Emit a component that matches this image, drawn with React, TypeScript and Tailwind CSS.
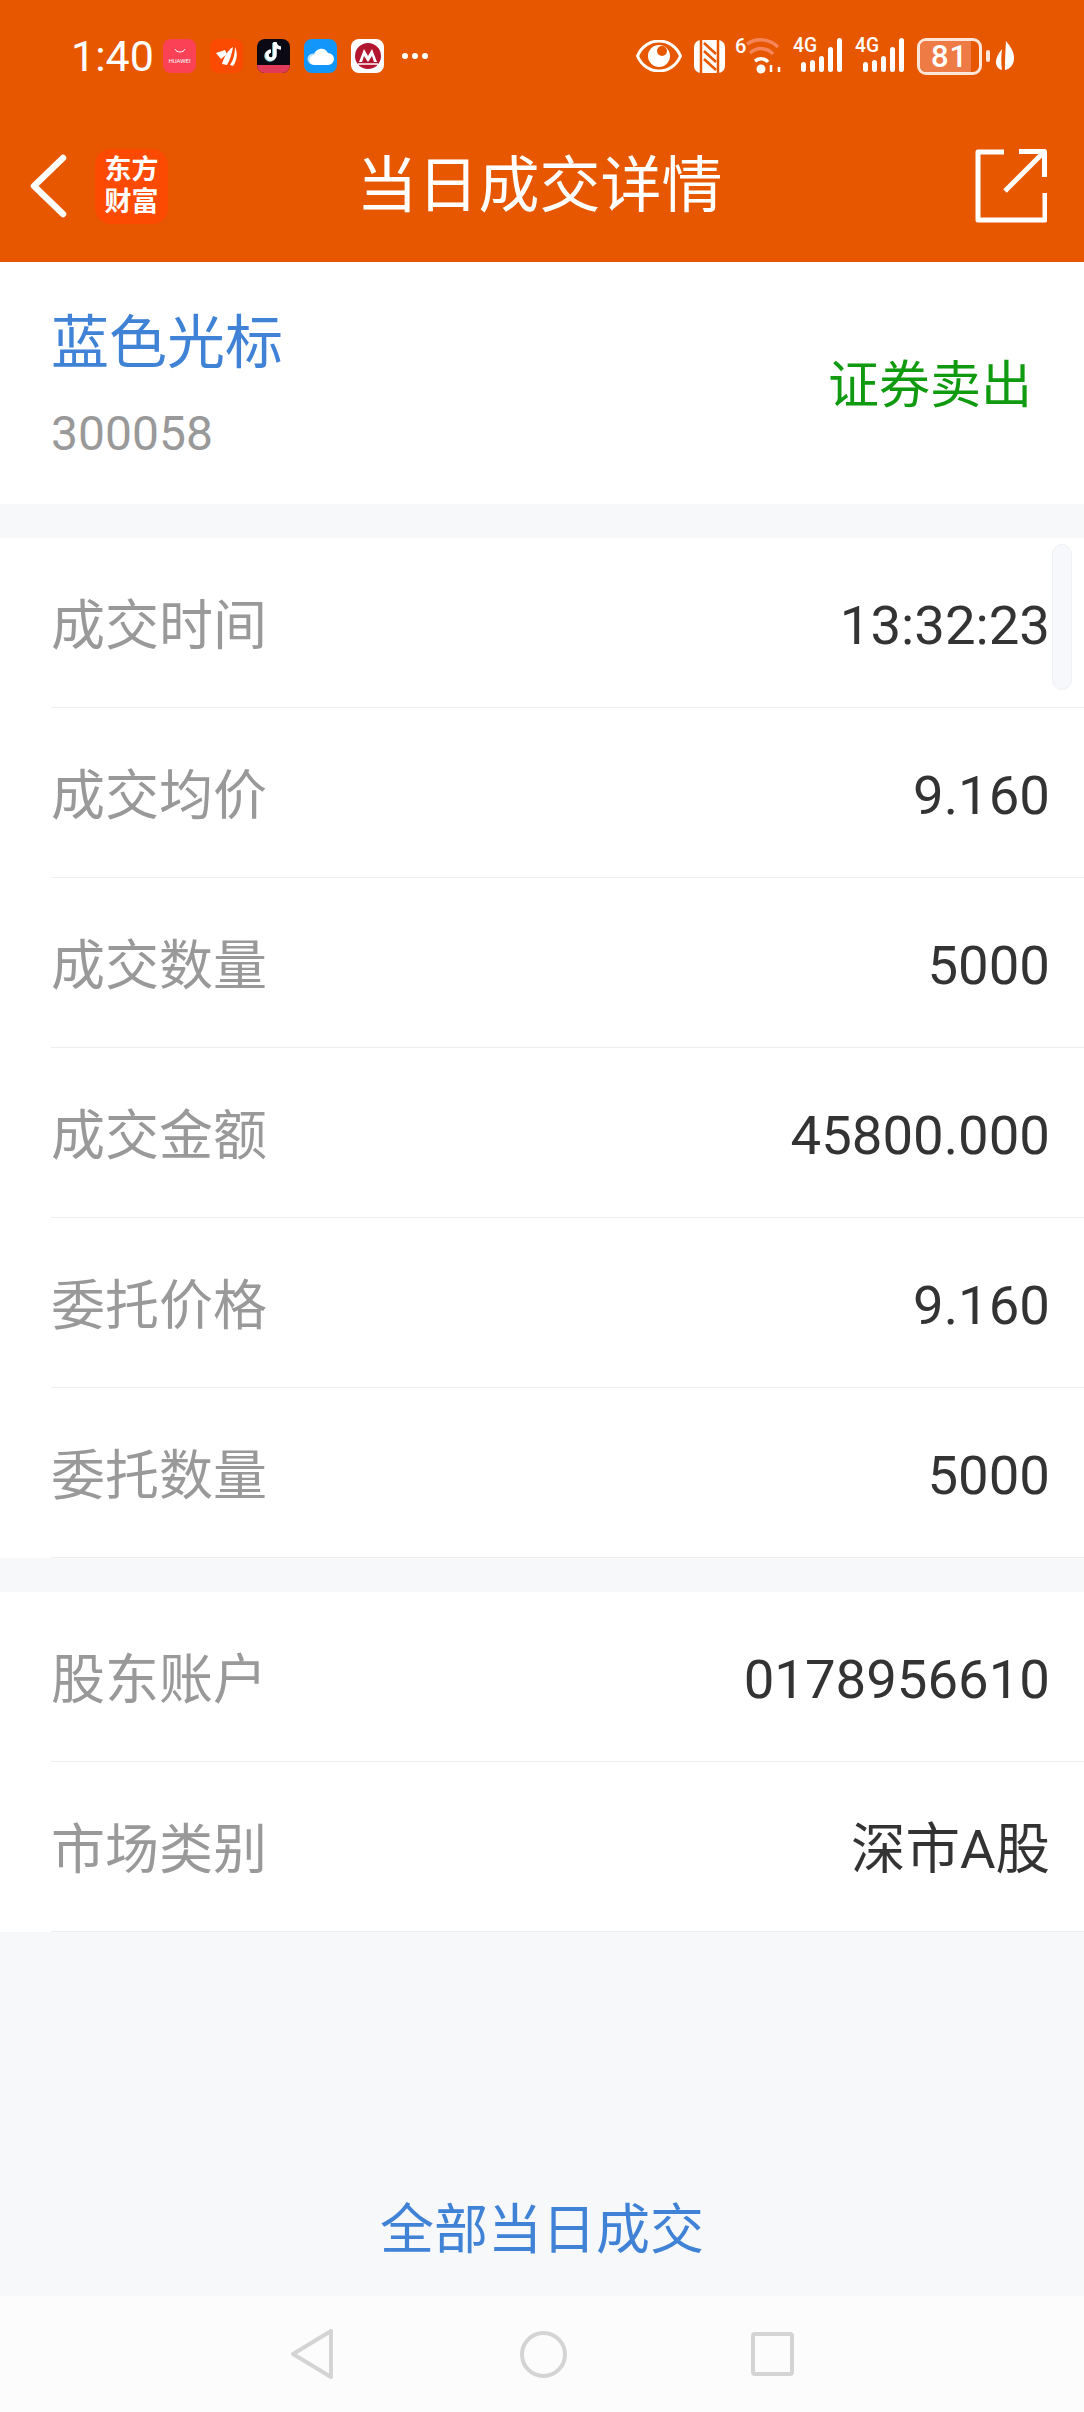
import React from "react";

const cjk = "font-['Roboto','Noto_Sans_CJK_SC',sans-serif]";

function Signal() {
  return (
    <svg width="50" height="44" viewBox="0 -8 50 44" fill="#fff" className="-mt-[8px]">
      <text x="0" y="14" fontSize="20" fontWeight="500" fontFamily="Roboto" textLength="24" lengthAdjust="spacingAndGlyphs">4G</text>
      <rect x="8" y="24" width="5" height="10" rx="2.500" />
      <rect x="17" y="22" width="5" height="12" rx="2.500" />
      <rect x="26" y="18" width="5" height="16" rx="2.500" />
      <rect x="35" y="9" width="5" height="25" rx="2.500" />
      <rect x="44" y="0" width="5" height="34" rx="2.500" />
    </svg>
  );
}

function StatusBar() {
  return (
    <div className="h-[112px] flex items-center justify-between pl-[71px] pr-[70px] text-white">
      <div className="flex items-center">
        <span className="text-[43px] leading-none font-['Roboto'] mr-[12px] w-[80px]">1:40</span>
        <div className="flex items-center gap-[14px]">
          <div className="w-[33px] h-[34px] rounded-[8px] bg-[#fb4155] flex flex-col items-center justify-center">
            <svg width="12" height="6" viewBox="0 0 12 6" fill="none" stroke="#fff" strokeWidth="1">
              <path d="M1 1c1.500 4 8.500 4 10 0" />
            </svg>
            <span className="text-[6px] leading-[8px] mt-[3px] font-['Roboto']">HUAWEI</span>
          </div>
          <div className="w-[33px] h-[34px] rounded-[8px] bg-[#fb4a02] flex items-center justify-center">
            <svg width="24" height="24" viewBox="0 0 24 24" fill="#fff">
              <path d="M1 9 10 6 12 10 6 15Z" />
              <path d="M7 20C9 13 13 6 18 3 17 9 15 16 12 21Z" />
              <path d="M15 21c3-4 5-11 5-18 3 6 2 14-2 19Z" />
            </svg>
          </div>
          <div className="w-[33px] h-[34px] rounded-[8px] bg-[#0b0a14] overflow-hidden flex flex-col items-center justify-between">
            <svg width="22" height="24" viewBox="0 0 22 24" fill="none" strokeWidth="3.500" className="mt-[1px]">
              <path d="M11 3v13a4 4 0 1 1-4-4" stroke="#8fdde4" />
              <path d="M12 2v13a4 4 0 1 1-4-4M12 3c1 3 3 5 6 5" stroke="#fff" />
            </svg>
            <div className="w-full h-[8px] bg-[#e23b5a]" />
          </div>
          <div className="w-[33px] h-[34px] rounded-[8px] bg-[#1296fb] flex items-center justify-center">
            <svg width="28" height="20" viewBox="0 0 28 20">
              <circle cx="6" cy="13" r="5.500" fill="#b9e0fb" />
              <path d="M8 19a5 5 0 0 1-1-10c1-7 11-9 14-2a6 6 0 0 1 0 12Z" fill="#fff" />
            </svg>
          </div>
          <div className="w-[33px] h-[34px] rounded-[8px] bg-white flex items-center justify-center">
            <svg width="28" height="28" viewBox="0 0 28 28">
              <circle cx="14" cy="14" r="13" fill="#b2162f" />
              <path d="M5 20 10 7l4 7 4-7 5 13h-3l-2-6-4 6-4-6-2 6Z" fill="#fff" />
              <path d="M4 22h20" stroke="#fff" strokeWidth="1.500" />
            </svg>
          </div>
        </div>
        <div className="flex items-center gap-[4px] ml-[18px]">
          <span className="w-[6px] h-[6px] rounded-full bg-white" />
          <span className="w-[6px] h-[6px] rounded-full bg-white" />
          <span className="w-[6px] h-[6px] rounded-full bg-white" />
        </div>
      </div>
      <div className="flex items-center">
        <svg width="46" height="32" viewBox="0 0 46 32" className="mr-[12px]">
          <path d="M1.500 16C10-4 36-4 44.500 16 36 36 10 36 1.500 16Z" fill="none" stroke="#fff" strokeWidth="3" />
          <circle cx="23" cy="16" r="11" fill="#fff" />
          <circle cx="26" cy="11" r="5" fill="#e65700" />
        </svg>
        <svg width="31" height="33" viewBox="0 0 31 33" className="mr-[10px]">
          <rect width="31" height="33" rx="7" fill="#fff" />
          <path d="M7 0v33M24 0v33" stroke="#e65700" strokeWidth="2.500" />
          <path d="M10 3 22 14M10 11l12 11M10 19l12 11" stroke="#e65700" strokeWidth="2.500" />
        </svg>
        <svg width="46" height="44" viewBox="0 -8 46 44" fill="none" className="mr-[12px] -mt-[8px]">
          <text x="0" y="15" fontSize="20" fontWeight="500" fontFamily="Roboto" fill="#fff">6</text>
          <path d="M12 6c9-6 22-6 31 3" stroke="#f4855a" strokeWidth="3.500" />
          <path d="M15 15c7-6 17-6 23 1" stroke="#f4855a" strokeWidth="3.500" />
          <path d="M20 23c4-3 10-3 13 1" stroke="#fff" strokeWidth="3.500" />
          <circle cx="26" cy="31" r="4.500" fill="#fff" />
          <path d="M36 27v7M44 29v5" stroke="#fff" strokeWidth="2.500" />
        </svg>
        <div className="mr-[12px] flex"><Signal /></div>
        <div className="mr-[12px] flex"><Signal /></div>
        <div className="relative w-[65px] h-[37px] rounded-[9px] border-[3px] border-[#ffe6d8] overflow-hidden flex items-center justify-center">
          <div className="absolute left-0 top-0 bottom-0 w-[86%] bg-[#ee7a45]" />
          <span className="relative text-[31px] leading-none font-medium font-['Roboto'] tracking-[1px]">81</span>
        </div>
        <div className="w-[4px] h-[12px] rounded-full bg-[#ffe6d8] ml-[4px] mr-[6px]" />
        <svg width="18" height="30" viewBox="0 0 18 30" fill="#fff">
          <path d="M10 0c5 6 8 11 8 17 0 7-4 11-9 12 0-7 0-12 1-29ZM6 8C2 13 0 17 0 21c0 4 2 7 6 8-1-6-1-13 0-21Z" />
        </svg>
      </div>
    </div>
  );
}

function AppBar() {
  return (
    <div className="h-[150px] pb-[2px] flex items-center text-white pl-[30px] pr-[37px]">
      <div className="flex-1 flex items-center">
        <svg width="37" height="64" viewBox="0 0 37 64" fill="none" stroke="#fff" strokeWidth="6.500" strokeLinecap="round" strokeLinejoin="round">
          <path d="M33 4 4 32l29 28" />
        </svg>
        <div className={`ml-[28px] w-[73px] h-[75px] rounded-[16px] bg-[#fc4a02] flex flex-col items-center justify-center text-[27px] leading-[32px] font-bold ${cjk}`}>
          <span>东方</span>
          <span>财富</span>
        </div>
      </div>
      <h1 className={`ml-[2px] text-[61px] leading-none font-normal ${cjk}`}>当日成交详情</h1>
      <div className="flex-1 flex justify-end">
        <svg width="72" height="74" viewBox="0 0 72 74" fill="none" stroke="#fff" strokeWidth="5" strokeLinejoin="round">
          <path d="M29 3H3v68h67V44" />
          <path d="M30 42 68 4" />
          <path d="M44 2.500h25.500V28" />
        </svg>
      </div>
    </div>
  );
}

function Row({ label, value }: { label: string; value: string }) {
  return (
    <div className="h-[170px] pl-[51px]">
      <div className="h-full flex items-center justify-between pr-[34px] border-b border-[#eeeeee]">
        <span className="pt-[9px] text-[54px] text-[#999999] leading-none">{label}</span>
        <span className="pt-[6px] text-[54.500px] text-[#333333] leading-none">{value}</span>
      </div>
    </div>
  );
}

export default function App() {
  return (
    <div className={`w-[1084px] h-[2412px] flex flex-col bg-[#f7f8fa] overflow-hidden ${cjk}`}>
      <div className="bg-[#e65700]">
        <StatusBar />
        <AppBar />
      </div>

      <section className="h-[242px] bg-white flex items-center justify-between pl-[51px] pr-[52px]">
        <div className="pt-[4px]">
          <p className="text-[58px] leading-[70px] text-[#3f82d6]">蓝色光标</p>
          <p className="text-[48px] leading-[56px] mt-[28px] text-[#999999]">300058</p>
        </div>
        <p className="pt-[4px] text-[51px] leading-none text-[#0f9a0f]">证券卖出</p>
      </section>

      <section className="relative mt-[34px] bg-white">
        <Row label="成交时间" value="13:32:23" />
        <Row label="成交均价" value="9.160" />
        <Row label="成交数量" value="5000" />
        <Row label="成交金额" value="45800.000" />
        <Row label="委托价格" value="9.160" />
        <Row label="委托数量" value="5000" />
        <div className="absolute right-[12px] top-[6px] w-[20px] h-[146px] rounded-full bg-[#f7f8fc] border border-[#f0f1f5]" />
      </section>

      <section className="mt-[34px] bg-white">
        <Row label="股东账户" value="0178956610" />
        <Row label="市场类别" value="深市A股" />
      </section>

      <div className="flex-1 flex items-end justify-center pb-[38px]">
        <span className="text-[54px] leading-none text-[#3f82d6]">全部当日成交</span>
      </div>

      <nav className="h-[116px] bg-[#fcfcfc] flex items-center justify-center">
        <svg width="42" height="50" viewBox="0 0 42 50" fill="none" stroke="#d4d4d4" strokeWidth="4" strokeLinejoin="round" className="mr-[187px]">
          <path d="M40 2v46L2 25Z" />
        </svg>
        <svg width="47" height="47" viewBox="0 0 47 47" fill="none" stroke="#d4d4d4" strokeWidth="4" className="mr-[184px]">
          <circle cx="23.500" cy="23.500" r="21.500" />
        </svg>
        <svg width="43" height="44" viewBox="0 0 43 44" fill="none" stroke="#d4d4d4" strokeWidth="4">
          <rect x="2" y="2" width="39" height="40" rx="2" />
        </svg>
      </nav>
    </div>
  );
}
